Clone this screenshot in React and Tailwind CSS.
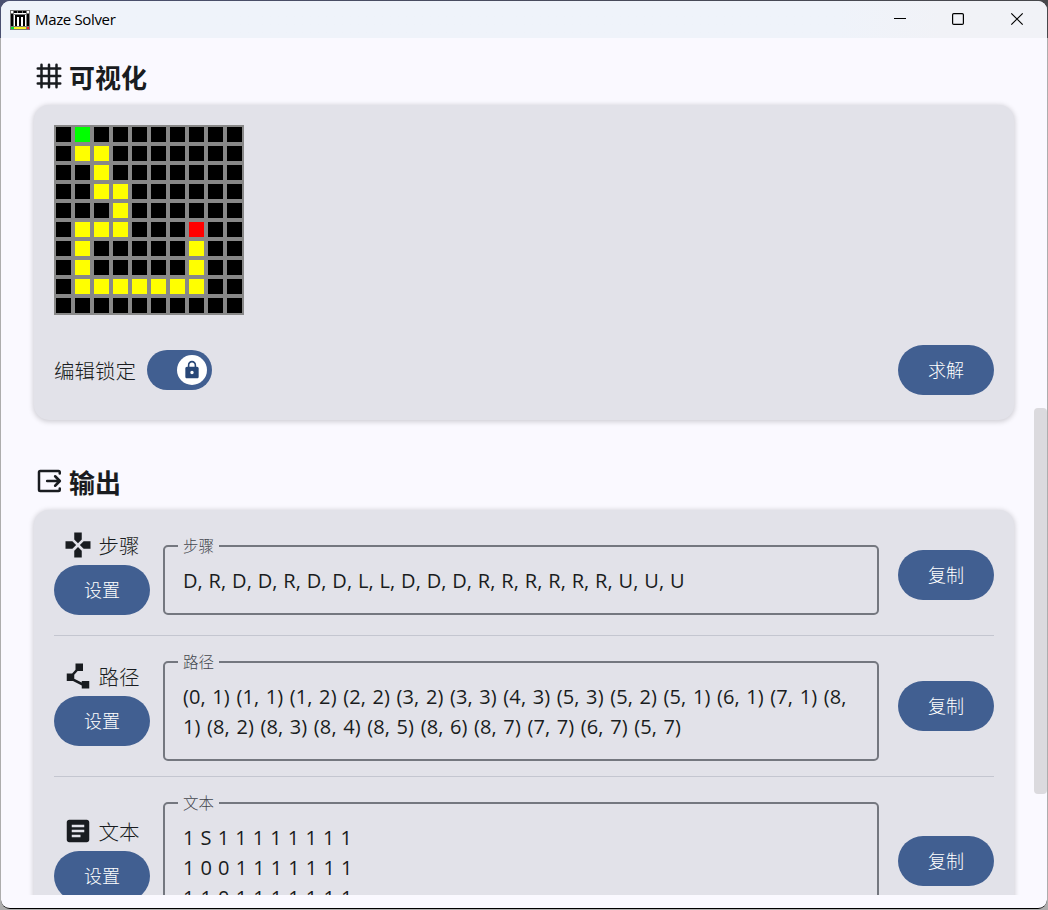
import React from "react";
import { MdLock, MdGamepad, MdPolyline, MdArticle } from "react-icons/md";

const MAZE = [
  "#S########",
  "#++#######",
  "##+#######",
  "##++######",
  "###+######",
  "#+++###E##",
  "#+#####+##",
  "#+#####+##",
  "#+++++++##",
  "##########",
];

const CELL_COLORS = {
  "#": "bg-black",
  "+": "bg-[#ffff00]",
  S: "bg-[#00ff00]",
  E: "bg-[#ff0000]",
};

function AppIcon() {
  return (
    <svg width="20" height="20" viewBox="0 0 20 20" shapeRendering="crispEdges">
      <rect width="20" height="20" fill="#777" />
      <path fill="#fff" d="M1 1h2v2H1zM17 1h2v2h-2zM4 3h12v1H4zM4 5h1v11H4zM7 7h2v9H7zM11 7h2v9h-2zM15 5h1v11h-1z" />
      <path fill="#000" d="M4 1h3v2H4zM8 1h4v2H8zM13 1h3v2h-3zM1 4h2v12H1zM17 4h2v12h-2zM5 5h10v2H5zM5 7h2v9H5zM9 7h2v9H9zM13 7h2v9h-2z" />
      <path fill="#f8f020" d="M4 17h12v2H4z" />
      <path fill="#00e030" d="M1 17h3v2H1z" />
      <path fill="#ff2020" d="M17 17h2v2h-2z" />
    </svg>
  );
}

function GridIcon() {
  return (
    <svg width="30" height="30" viewBox="0 0 24 24" fill="none" stroke="currentColor" strokeWidth="2" strokeLinecap="round">
      <path d="M6 3v18M12 3v18M18 3v18M3 6h18M3 12h18M3 18h18" />
    </svg>
  );
}

function OutputIcon() {
  return (
    <svg width="30" height="30" viewBox="0 0 24 24" fill="none" stroke="currentColor" strokeWidth="2" strokeLinecap="round" strokeLinejoin="round">
      <path d="M20.6 6V5a1 1 0 0 0-1-1H5a1 1 0 0 0-1 1v14a1 1 0 0 0 1 1h14.6a1 1 0 0 0 1-1v-1" />
      <path d="M10.5 12h10M16.9 8.2L20.7 12l-3.8 3.8" />
    </svg>
  );
}

function Button({ children, className = "" }) {
  return (
    <button className={`flex h-[50px] w-24 shrink-0 items-center justify-center rounded-full bg-[#415f91] text-[18px] font-light leading-none text-white ${className}`}>
      {children}
    </button>
  );
}

function Heading({ icon, children }) {
  return (
    <h2 className="flex h-9 items-center gap-[5px] text-[26px] font-bold leading-9">
      {icon}
      <span className="pt-[3px]">{children}</span>
    </h2>
  );
}

function OutputRow({ icon, label, lines, spacing, rowClass, leftClass, fieldClass, copyClass }) {
  return (
    <div className={`flex items-start ${rowClass}`}>
      <div className={`w-24 shrink-0 ${leftClass}`}>
        <div className="flex h-[30px] items-center justify-center gap-[6px] text-[20.5px] font-light leading-[30px]">
          {icon}
          <span className="w-[43px] whitespace-nowrap pt-[2px]">{label}</span>
        </div>
        <Button className="mt-[5px]">设置</Button>
      </div>
      <div className={`relative ml-[13px] w-[716px] shrink-0 rounded-[5px] border-2 border-[#74777f] px-[18px] pt-[19px] text-[20px] leading-[30px] ${fieldClass}`}>
        <span className="absolute -top-[12px] left-[13px] bg-[#e2e2e9] px-[5px] text-[15.5px] font-light leading-[22px] text-[#44474e]">{label}</span>
        {lines.map((line) => (
          <p key={line} className={`whitespace-pre ${spacing}`}>{line}</p>
        ))}
      </div>
      <Button className={`ml-auto ${copyClass}`}>复制</Button>
    </div>
  );
}

export default function App() {
  return (
    <div className="h-[910px] w-[1048px] overflow-hidden bg-linear-to-r from-[#4a5070] to-[#47474b] font-['Open_Sans','Noto_Sans_CJK_SC',sans-serif] text-[#191c20]">
      <div className="flex h-full flex-col bg-linear-to-b from-transparent from-[38px] to-[#adadad] to-[38px] pl-px pr-px pt-px">
        <div className="flex h-[908px] flex-col overflow-hidden rounded-[9px] border-b border-black bg-[#faf9ff]">
          <header className="flex h-[37px] shrink-0 items-center bg-linear-to-r from-[#eff3fa] from-80% to-[#f1f2f7] to-90% pl-[9px] text-black">
            <AppIcon />
            <span className="ml-[5px] pb-[2px] text-[15px] leading-5 tracking-[-0.35px]">Maze Solver</span>
            <svg className="ml-auto" width="153" height="37" viewBox="0 0 153 37" fill="none" stroke="#000" strokeWidth="1.2">
              <path d="M0 17.5h12" />
              <rect x="58.6" y="12.6" width="10.8" height="10.8" rx="1.2" />
              <path d="M117.3 12.3l11.4 11.4M128.7 12.3l-11.4 11.4" />
            </svg>
          </header>

          <div className="flex h-[857px] shrink-0 overflow-hidden">
            <main className="w-[1033px] shrink-0 overflow-hidden pl-[33px] pr-5 pt-[20px]">
              <Heading icon={<GridIcon />}>可视化</Heading>
              <section className="mt-[11px] h-[315px] w-[980px] rounded-[15px] bg-[#e2e2e9] px-5 pt-5 shadow-[0_1px_5px_1px_rgba(0,0,0,0.17)]">
                <div className="grid w-[190px] grid-cols-10 bg-[#888888]">
                  {MAZE.join("").split("").map((cell, i) => (
                    <div key={i} className="h-[19px] p-[2px]">
                      <div className={`h-[15px] ${CELL_COLORS[cell]}`} />
                    </div>
                  ))}
                </div>
                <div className="mt-[30px] flex items-center">
                  <span className="w-[93px] pt-[2px] text-[20.5px] font-light leading-[30px]">编辑锁定</span>
                  <div className="flex h-10 w-[65px] items-center justify-end rounded-full bg-[#415f91] pr-[5px]">
                    <div className="flex size-[30px] items-center justify-center rounded-full bg-white text-[#284777]">
                      <MdLock size={20} />
                    </div>
                  </div>
                  <Button className="ml-auto">求解</Button>
                </div>
              </section>

              <div className="mt-[43px]">
                <Heading icon={<OutputIcon />}>输出</Heading>
              </div>
              <section className="mt-[11px] h-[500px] w-[980px] rounded-[15px] bg-[#e2e2e9] px-5 pt-5 shadow-[0_1px_5px_1px_rgba(0,0,0,0.17)]">
                <OutputRow
                  icon={<MdGamepad size={30} />}
                  label="步骤"
                  rowClass="h-[105px]"
                  leftClass=""
                  fieldClass="mt-[15px] h-[70px]"
                  copyClass="mt-5"
                  spacing="tracking-[0.1px] [word-spacing:0.43px]"
                  lines={["D, R, D, D, R, D, D, L, L, D, D, D, R, R, R, R, R, R, U, U, U"]}
                />
                <OutputRow
                  icon={<MdPolyline size={30} />}
                  label="路径"
                  rowClass="h-[142px] border-t border-[#c4c6d0] pt-[25px]"
                  leftClass=""
                  fieldClass="h-[100px]"
                  copyClass="mt-5"
                  spacing="tracking-[0.1px] [word-spacing:1.23px]"
                  lines={[
                    "(0, 1) (1, 1) (1, 2) (2, 2) (3, 2) (3, 3) (4, 3) (5, 3) (5, 2) (5, 1) (6, 1) (7, 1) (8,",
                    "1) (8, 2) (8, 3) (8, 4) (8, 5) (8, 6) (8, 7) (7, 7) (6, 7) (5, 7)",
                  ]}
                />
                <OutputRow
                  icon={<MdArticle size={30} />}
                  label="文本"
                  rowClass="-mt-px border-t border-[#c4c6d0] pt-[25px]"
                  leftClass="mt-[14px]"
                  fieldClass="h-[340px]"
                  copyClass="mt-[34px]"
                  spacing="tracking-[0.46px]"
                  lines={[
                    "1 S 1 1 1 1 1 1 1 1",
                    "1 0 0 1 1 1 1 1 1 1",
                    "1 1 0 1 1 1 1 1 1 1",
                  ]}
                />
              </section>
            </main>
            <div className="mt-[370px] h-[386px] w-[13px] shrink-0 rounded-[4px] bg-[#dbdade]" />
          </div>
        </div>
      </div>
    </div>
  );
}
